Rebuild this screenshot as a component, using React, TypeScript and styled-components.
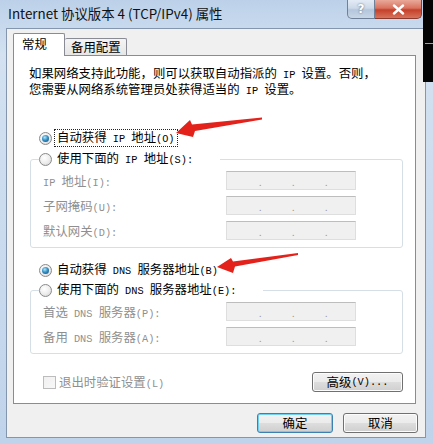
import React from "react";
import styled, { createGlobalStyle } from "styled-components";

const GlobalStyle = createGlobalStyle`
  html, body {
    margin: 0;
    padding: 0;
    background: #c6d8ec;
  }
  body {
    font-family: "Noto Sans CJK SC", "Noto Sans", sans-serif;
    font-size: 12.4px;
    color: #000;
  }
`;

const Window = styled.div`
  position: relative;
  width: 433px;
  height: 444px;
  box-sizing: border-box;
  display: flex;
  flex-direction: column;
  overflow: hidden;
  background: linear-gradient(180deg, #bcd1e9 0%, #d3e1f1 12%, #c9daee 60%, #bfd3ea 100%);
`;

const TitleBar = styled.div`
  height: 28px;
  flex: none;
  display: flex;
  align-items: flex-start;
  padding: 0 11px 0 8px;
`;

const Title = styled.div`
  flex: 1;
  line-height: 26px;
  font-size: 13.4px;
  color: #111;
  white-space: nowrap;
`;

const CaptionButtons = styled.div`
  display: flex;
`;

const CaptionButton = styled.div<{ $close?: boolean }>`
  width: ${p => (p.$close ? "47px" : "28px")};
  height: 19px;
  box-sizing: border-box;
  display: flex;
  align-items: center;
  justify-content: center;
  border: 1px solid ${p => (p.$close ? "#8b3a2e" : "#6f8199")};
  border-top: none;
  border-left: ${p => (p.$close ? "none" : undefined)};
  border-radius: ${p => (p.$close ? "0 0 5px 0" : "0 0 0 5px")};
  background: ${p =>
    p.$close
      ? "linear-gradient(180deg, #e9a99a 0%, #d9735f 45%, #c5402a 55%, #d8735c 100%)"
      : "linear-gradient(180deg, #e3ebf5 0%, #ccd9e8 45%, #b4c6dc 55%, #c8d6e6 100%)"};
  color: #fff;
  font-family: "DejaVu Sans", sans-serif;
  font-size: 12px;
  font-weight: bold;
  text-shadow: 0 0 2px #4a5a70;
`;

const Body = styled.div`
  flex: 1;
  display: flex;
  padding: 0 7px 6px 6px;
`;

const Client = styled.div`
  flex: 1;
  display: flex;
  flex-direction: column;
  background: #f0f0f0;
  border: 1px solid #8496ae;
  padding: 4px 9px 0 6px;
`;

const TabStrip = styled.div`
  display: flex;
  align-items: flex-end;
  height: 22px;
  position: relative;
  z-index: 1;
`;

const Tab = styled.div<{ $active?: boolean }>`
  box-sizing: border-box;
  width: ${p => (p.$active ? "52px" : "62px")};
  height: ${p => (p.$active ? "23px" : "17px")};
  margin-bottom: ${p => (p.$active ? "-1px" : "0")};
  border: 1px solid #898c95;
  border-bottom: none;
  border-left: ${p => (p.$active ? undefined : "none")};
  border-radius: 2px 2px 0 0;
  background: ${p => (p.$active ? "#fff" : "linear-gradient(180deg, #f4f4f4 0%, #e6e6e6 100%)")};
  padding-left: ${p => (p.$active ? "8px" : "6px")};
  line-height: ${p => (p.$active ? "21px" : "16px")};
  white-space: nowrap;
`;

const Panel = styled.div`
  box-sizing: border-box;
  width: 403px;
  height: 349px;
  border: 1px solid #898c95;
  background: #fff;
  display: flex;
  flex-direction: column;
`;

const Intro = styled.div`
  margin: 10px 0 0 15px;
  line-height: 14px;
  white-space: nowrap;
`;

// half-width runs, like the bitmap font of the dialog
const Half = styled.span`
  font-family: "Liberation Mono", monospace;
  font-size: 0.83em;
  white-space: pre;
`;

const Mixed = ({ text }: { text: string }) => (
  <>
    {text.split(/([ -~]+)/).map((s, i) => (i % 2 ? <Half key={i}>{s}</Half> : s))}
  </>
);

const RadioRow = styled.div<{ $top: number }>`
  display: flex;
  align-items: center;
  height: 16px;
  margin: ${p => p.$top}px 0 0 25px;
  white-space: nowrap;
`;

const Radio = styled.span<{ $checked?: boolean }>`
  width: 13px;
  height: 13px;
  box-sizing: border-box;
  flex: none;
  border-radius: 50%;
  border: 1px solid #8a8a8a;
  background: radial-gradient(circle at 40% 35%, #ffffff 0%, #ececec 55%, #cdcdcd 100%);
  display: inline-flex;
  align-items: center;
  justify-content: center;

  &::after {
    content: "";
    display: ${p => (p.$checked ? "block" : "none")};
    width: 7px;
    height: 7px;
    border-radius: 50%;
    background: radial-gradient(circle at 40% 35%, #b5e6f7 0%, #3491c7 45%, #0f3f66 100%);
  }
`;

const RadioLabel = styled.span<{ $focused?: boolean }>`
  margin-left: 2px;
  padding: 0 2px;
  line-height: 14px;
  border: 1px dotted ${p => (p.$focused ? "#222" : "transparent")};
`;

const Group = styled.fieldset<{ $top: number }>`
  margin: ${p => p.$top}px 12px 0 16px;
  padding: 4px 0 7px 8px;
  border: 1px solid #d5dfe5;
  border-radius: 3px;
  min-width: 0;
`;

const Legend = styled.legend<{ $gap: number }>`
  padding: 0 ${p => p.$gap}px 0 0;
  height: 16px;
  display: flex;
  align-items: center;
  white-space: nowrap;
`;

const Rows = styled.div`
  display: flex;
  flex-direction: column;
  gap: 6px;
`;

const FieldRow = styled.div`
  display: flex;
  align-items: center;
  padding-left: 4px;
`;

const FieldLabel = styled.span`
  width: 183px;
  color: #8f8f8f;
  white-space: nowrap;
`;

const IpBox = styled.div`
  box-sizing: border-box;
  width: 130px;
  height: 19px;
  background: #f0f0f0;
  border: 1px solid #dedede;
  border-top-color: #bdbdbd;
  display: grid;
  grid-template-columns: repeat(3, 32px 1px) 1fr;
  align-items: end;
`;

const IpDot = styled.span`
  font-size: 9px;
  line-height: 12px;
  color: #9a9a9a;
`;

const BottomRow = styled.div`
  margin: 18px 12px 0 29px;
  display: flex;
  align-items: center;
  justify-content: space-between;
  height: 20px;
`;

const CheckWrap = styled.div`
  display: flex;
  align-items: center;
  color: #8f8f8f;
  gap: 3px;
  white-space: nowrap;
`;

const Checkbox = styled.span`
  width: 13px;
  height: 13px;
  box-sizing: border-box;
  border: 1px solid #bcbcbc;
  background: linear-gradient(135deg, #f0f0f0 0%, #f8f8f8 100%);
`;

const Button = styled.div<{ $w: number; $default?: boolean }>`
  box-sizing: border-box;
  width: ${p => p.$w}px;
  height: 20px;
  border: 1px solid ${p => (p.$default ? "#3c7fb1" : "#707070")};
  border-radius: 3px;
  box-shadow: inset 0 0 0 1px ${p => (p.$default ? "#6fd0f2" : "#fcfcfc")};
  background: linear-gradient(180deg, #f2f2f2 0%, #ebebeb 48%, #dddddd 52%, #cfcfcf 100%);
  display: flex;
  align-items: center;
  justify-content: center;
  line-height: 18px;
  white-space: nowrap;
`;

const Footer = styled.div`
  margin: 9px -2px 0 0;
  display: flex;
  justify-content: flex-end;
  gap: 10px;
`;

const Backdrop = styled.div`
  position: absolute;
  top: 0;
  right: 0;
  width: 10px;
  height: 82px;
  background: #050505;

  &::after {
    content: "";
    position: absolute;
    left: 2px;
    right: 0;
    top: 43px;
    height: 1px;
    background: #8fbf3a;
  }
`;

const Overlay = styled.svg`
  position: absolute;
  top: 0;
  left: 0;
  pointer-events: none;
`;

const IpInput = () => (
  <IpBox>
    <span />
    <IpDot>.</IpDot>
    <span />
    <IpDot>.</IpDot>
    <span />
    <IpDot>.</IpDot>
    <span />
  </IpBox>
);

const Field = ({ label }: { label: string }) => (
  <FieldRow>
    <FieldLabel>
      <Mixed text={label} />
    </FieldLabel>
    <IpInput />
  </FieldRow>
);

export default function App() {
  return (
    <>
      <GlobalStyle />
      <Window>
        <TitleBar>
          <Title>Internet 协议版本 4 (TCP/IPv4) 属性</Title>
          <CaptionButtons>
            <CaptionButton>?</CaptionButton>
            <CaptionButton $close>
              <svg width="13" height="11" viewBox="0 0 13 11">
                <path d="M2 1.5 L11 9.5 M11 1.5 L2 9.5" stroke="#fff" strokeWidth="2.4" strokeLinecap="round" />
              </svg>
            </CaptionButton>
          </CaptionButtons>
        </TitleBar>
        <Body>
          <Client>
            <TabStrip>
              <Tab $active>常规</Tab>
              <Tab>备用配置</Tab>
            </TabStrip>
            <Panel>
              <Intro>
                <Mixed text="如果网络支持此功能，则可以获取自动指派的 IP 设置。否则，" />
                <br />
                <Mixed text="您需要从网络系统管理员处获得适当的 IP 设置。" />
              </Intro>

              <RadioRow $top={32}>
                <Radio $checked />
                <RadioLabel $focused>
                  <Mixed text="自动获得 IP 地址(O)" />
                </RadioLabel>
              </RadioRow>

              <Group $top={5}>
                <Legend $gap={24}>
                  <Radio />
                  <RadioLabel>
                    <Mixed text="使用下面的 IP 地址(S):" />
                  </RadioLabel>
                </Legend>
                <Rows>
                  <Field label="IP 地址(I):" />
                  <Field label="子网掩码(U):" />
                  <Field label="默认网关(D):" />
                </Rows>
              </Group>

              <RadioRow $top={14}>
                <Radio $checked />
                <RadioLabel>
                  <Mixed text="自动获得 DNS 服务器地址(B)" />
                </RadioLabel>
              </RadioRow>

              <Group $top={4}>
                <Legend $gap={24}>
                  <Radio />
                  <RadioLabel>
                    <Mixed text="使用下面的 DNS 服务器地址(E):" />
                  </RadioLabel>
                </Legend>
                <Rows>
                  <Field label="首选 DNS 服务器(P):" />
                  <Field label="备用 DNS 服务器(A):" />
                </Rows>
              </Group>

              <BottomRow>
                <CheckWrap>
                  <Checkbox />
                  <span>
                    <Mixed text="退出时验证设置(L)" />
                  </span>
                </CheckWrap>
                <Button $w={91}>
                  <Mixed text="高级(V)..." />
                </Button>
              </BottomRow>
            </Panel>
            <Footer>
              <Button $w={76} $default>确定</Button>
              <Button $w={75}>取消</Button>
            </Footer>
          </Client>
        </Body>
        <Backdrop />
        <Overlay width="433" height="444" viewBox="0 0 433 444">
          <polygon points="176,133 190,120 192,124.5 262,117.5 262,119.5 195,131 193,137" fill="#e3221c" />
          <polygon points="217,267 231,258 233,261.5 298,253 298,255 235,266.5 233,273" fill="#e3221c" />
        </Overlay>
      </Window>
    </>
  );
}
